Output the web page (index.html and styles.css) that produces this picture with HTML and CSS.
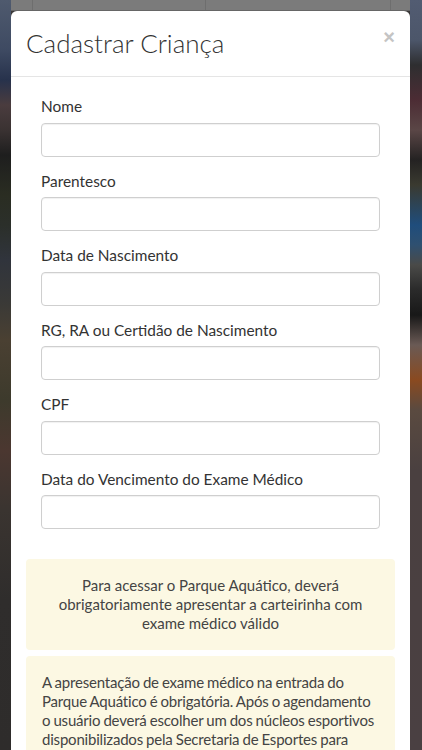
FILE: index.html
```html
<!DOCTYPE html>
<html lang="pt-BR">
<head>
<meta charset="utf-8">
<title>Cadastrar Criança</title>
<link rel="stylesheet" href="styles.css">
</head>
<body>
<div class="page-table">
  <div class="cell c1"></div>
  <div class="cell c2"></div>
  <div class="cell c3"></div>
  <div class="cell c4"></div>
</div>
<div class="modal">
  <div class="modal-header">
    <h4 class="modal-title">Cadastrar Criança</h4>
    <span class="close">&times;</span>
  </div>
  <div class="modal-body">
    <form class="form">
      <div class="form-group">
        <label class="label">Nome</label>
        <input class="input" type="text">
      </div>
      <div class="form-group">
        <label class="label">Parentesco</label>
        <input class="input" type="text">
      </div>
      <div class="form-group">
        <label class="label">Data de Nascimento</label>
        <input class="input" type="text">
      </div>
      <div class="form-group">
        <label class="label">RG, RA ou Certidão de Nascimento</label>
        <input class="input" type="text">
      </div>
      <div class="form-group">
        <label class="label">CPF</label>
        <input class="input" type="text">
      </div>
      <div class="form-group">
        <label class="label">Data do Vencimento do Exame Médico</label>
        <input class="input" type="text">
      </div>
    </form>
    <div class="alert alert-center">Para acessar o Parque Aquático, deverá obrigatoriamente apresentar a carteirinha com exame médico válido</div>
    <div class="alert alert-left">A apresentação de exame médico na entrada do Parque Aquático é obrigatória. Após o agendamento o usuário deverá escolher um dos núcleos esportivos disponibilizados pela Secretaria de Esportes para realizar o exame médico.</div>
  </div>
</div>
</body>
</html>
```
FILE: styles.css
```css
html, body {
  margin: 0;
  padding: 0;
  height: 750px;
  overflow: hidden;
}
body {
  font-family: Lato, "Open Sans", "Liberation Sans", sans-serif;
  color: #333;
  background:
    linear-gradient(to bottom, #4f5a6e 0px, #3e4a62 50px, #27324c 80px, #4a3c3e 105px, #3a3232 130px, #1e1e1e 155px, #2a2d22 195px, #2b2f2a 225px, #30343c 260px, #393937 300px, #4a4032 340px, #3d3a2c 400px, #4b3730 450px, #3a3430 510px, #2f2d2c 600px, #2e2c2b 750px) left top / 11px 100% no-repeat,
    linear-gradient(to bottom, #525c72 0px, #4c566a 40px, #2e2e30 65px, #4c2c34 100px, #5a4646 130px, #242222 160px, #3a3a30 185px, #1f4d7c 225px, #2f5070 245px, #4a4a48 265px, #2a2a2a 290px, #181818 315px, #6a5a55 345px, #8a4a20 380px, #5a4a40 410px, #4a4040 470px, #4a4042 750px) right top / 12px 100% no-repeat,
    #3a3838;
}
.page-table {
  height: 10px;
  margin: 0 12px 0 11px;
  background: #7b7b7b;
  border-bottom: 1px solid #666;
  display: flex;
}
.cell {
  border-right: 1px solid #6e6e6e;
}
.c1 { width: 21px; }
.c2 { width: 172px; }
.c3 { width: 184px; }
.c4 { flex: 1; border-right: 0; }
.modal {
  margin: 0 12px 0 11px;
  background: #fff;
  border-radius: 6px 6px 0 0;
  height: 739px;
  overflow: hidden;
}
.modal-header {
  position: relative;
  padding: 15px 15px;
  border-bottom: 1px solid #e5e5e5;
  height: 35px;
  display: flex;
  align-items: center;
}
.modal-title {
  margin: 0;
  font-size: 26px;
  font-weight: 300;
  color: #333;
  line-height: 35px;
}
.close {
  position: absolute;
  right: 15px;
  top: 16px;
  font-size: 20px;
  font-weight: 700;
  color: #c4c4c4;
  line-height: 20px;
  font-family: "Liberation Sans", sans-serif;
}
.modal-body {
  padding: 19px 15px 0;
}
.form {
  padding: 0 15px;
}
.form-group {
  margin-bottom: 14px;
  display: flex;
  flex-direction: column;
}
.label {
  font-size: 15.4px;
  line-height: 21.5px;
  margin-bottom: 5px;
  color: #333;
}
.input {
  box-sizing: border-box;
  height: 34px;
  width: 100%;
  margin: 0;
  border: 1px solid #cfcfcf;
  border-radius: 4px;
  background: #fff;
  box-shadow: inset 0 1px 1px rgba(0,0,0,.06);
}
.alert {
  background: #fcf8e3;
  border-radius: 4px;
  color: #444;
  line-height: 19.2px;
}
.alert-center {
  margin-top: 30px;
  text-align: center;
  font-size: 15px;
  padding: 17px 16px 16px;
}
.alert-left {
  margin-top: 6px;
  font-size: 15px;
  letter-spacing: -0.2px;
  word-spacing: -0.5px;
  padding: 17px 14px 15px 16px;
}
```
